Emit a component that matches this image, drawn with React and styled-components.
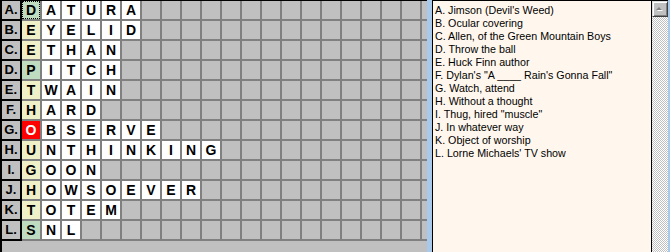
import React from 'react';
import styled, { createGlobalStyle } from 'styled-components';

const GlobalStyle = createGlobalStyle`
  body {
    margin: 0;
    background: #a8c8ec;
  }
`;

const rows = [
  { label: 'A', word: 'DATURA', tone: 'green', focus: true },
  { label: 'B', word: 'EYELID', tone: 'yellow' },
  { label: 'C', word: 'ETHAN', tone: 'yellow' },
  { label: 'D', word: 'PITCH', tone: 'green' },
  { label: 'E', word: 'TWAIN', tone: 'yellow' },
  { label: 'F', word: 'HARD', tone: 'yellow' },
  { label: 'G', word: 'OBSERVE', tone: 'red' },
  { label: 'H', word: 'UNTHINKING', tone: 'yellow' },
  { label: 'I', word: 'GOON', tone: 'yellow' },
  { label: 'J', word: 'HOWSOEVER', tone: 'yellow' },
  { label: 'K', word: 'TOTEM', tone: 'yellow' },
  { label: 'L', word: 'SNL', tone: 'green' },
];

const clues = [
  'A. Jimson (Devil\'s Weed)',
  'B. Ocular covering',
  'C. Allen, of the Green Mountain Boys',
  'D. Throw the ball',
  'E. Huck Finn author',
  'F. Dylan\'s "A ____ Rain\'s Gonna Fall"',
  'G. Watch, attend',
  'H. Without a thought',
  'I. Thug, hired "muscle"',
  'J. In whatever way',
  'K. Object of worship',
  'L. Lorne Michaels\' TV show',
];

const COLS = 21;

const tones = {
  empty: ['#c0c0c0', '#000'],
  white: ['#ffffff', '#000'],
  yellow: ['#f0f0c8', '#000'],
  green: ['#c0dcc0', '#000'],
  red: ['#ff0000', '#fff'],
};

const Window = styled.div`
  display: flex;
  width: 670px;
  height: 252px;
  overflow: hidden;
  background: #a8c8ec;
`;

const BoardPane = styled.div`
  box-sizing: border-box;
  width: 427px;
  height: 252px;
  flex: none;
  display: flex;
  align-items: flex-start;
  overflow: hidden;
  background: #c0c0c0;
  border-top: 1px solid #000;
  border-left: 2px solid #000;
`;

const LabelColumn = styled.div`
  display: grid;
  grid-template-rows: repeat(12, 18px);
  gap: 2px;
  padding: 0 2px 2px 0;
  background: #000;
`;

const Label = styled.div`
  width: 18px;
  height: 18px;
  background: #c0c0c0;
  font: bold 13px/18px 'Liberation Sans', Arial, sans-serif;
  text-align: center;
  color: #000;
`;

const CellGrid = styled.div`
  display: grid;
  grid-template-columns: repeat(${COLS}, 18px);
  grid-auto-rows: 18px;
  gap: 2px;
  padding-bottom: 2px;
  background: #808080;
`;

const Cell = styled.div`
  width: 18px;
  height: 18px;
  background: ${({ $tone }) => tones[$tone][0]};
  color: ${({ $tone }) => tones[$tone][1]};
  font: bold 14px/18px 'Liberation Sans', Arial, sans-serif;
  text-align: center;
  outline: ${({ $focus }) => ($focus ? '1px dotted #000' : 'none')};
  outline-offset: -1px;
`;

const ClueBox = styled.div`
  margin-left: 5px;
  width: 236px;
  height: 252px;
  flex: none;
  box-sizing: border-box;
  display: flex;
  border-top: 1px solid #000;
  border-left: 1px solid #000;
`;

const ClueList = styled.ul`
  flex: 1;
  margin: 0;
  padding: 3px 0 0 2px;
  list-style: none;
  background: #fff7ee;
  font: 10.7px/13px 'Liberation Sans', Arial, sans-serif;
  color: #000;
  white-space: nowrap;
`;

const Scrollbar = styled.div`
  width: 16px;
  border-left: 1px solid #000;
  background: repeating-conic-gradient(#c0c0c0 0 25%, #ffffff 0 50%) 0 0 / 2px 2px;
`;

const ScrollButton = styled.div`
  box-sizing: border-box;
  width: 16px;
  height: 16px;
  display: flex;
  align-items: center;
  justify-content: center;
  background: #c0c0c0;
  border-top: 1px solid #dfdfdf;
  border-left: 1px solid #dfdfdf;
  border-right: 1px solid #404040;
  border-bottom: 1px solid #404040;
  box-shadow: inset 1px 1px 0 #fff, inset -1px -1px 0 #808080;
`;

const App = () => {
  const cells = [];
  rows.forEach((row, r) => {
    for (let c = 0; c < COLS; c++) {
      const ch = row.word[c];
      let tone = 'empty';
      if (c === 0) tone = row.tone;
      else if (ch) tone = 'white';
      cells.push(
        <Cell key={`${r}-${c}`} $tone={tone} $focus={c === 0 && row.focus}>
          {ch || ''}
        </Cell>
      );
    }
  });

  return (
    <>
      <GlobalStyle />
      <Window>
        <BoardPane>
          <LabelColumn>
            {rows.map((row) => (
              <Label key={row.label}>{row.label}.</Label>
            ))}
          </LabelColumn>
          <CellGrid>{cells}</CellGrid>
        </BoardPane>
        <ClueBox>
          <ClueList>
            {clues.map((clue) => (
              <li key={clue}>{clue}</li>
            ))}
          </ClueList>
          <Scrollbar>
            <ScrollButton>
              <svg width="8" height="6" viewBox="0 0 8 6">
                <path d="M1 5 L7 5 L4 2 Z" fill="#fff" />
                <path d="M0 4 L6 4 L3 1 Z" fill="#808080" />
              </svg>
            </ScrollButton>
          </Scrollbar>
        </ClueBox>
      </Window>
    </>
  );
};

export default App;
